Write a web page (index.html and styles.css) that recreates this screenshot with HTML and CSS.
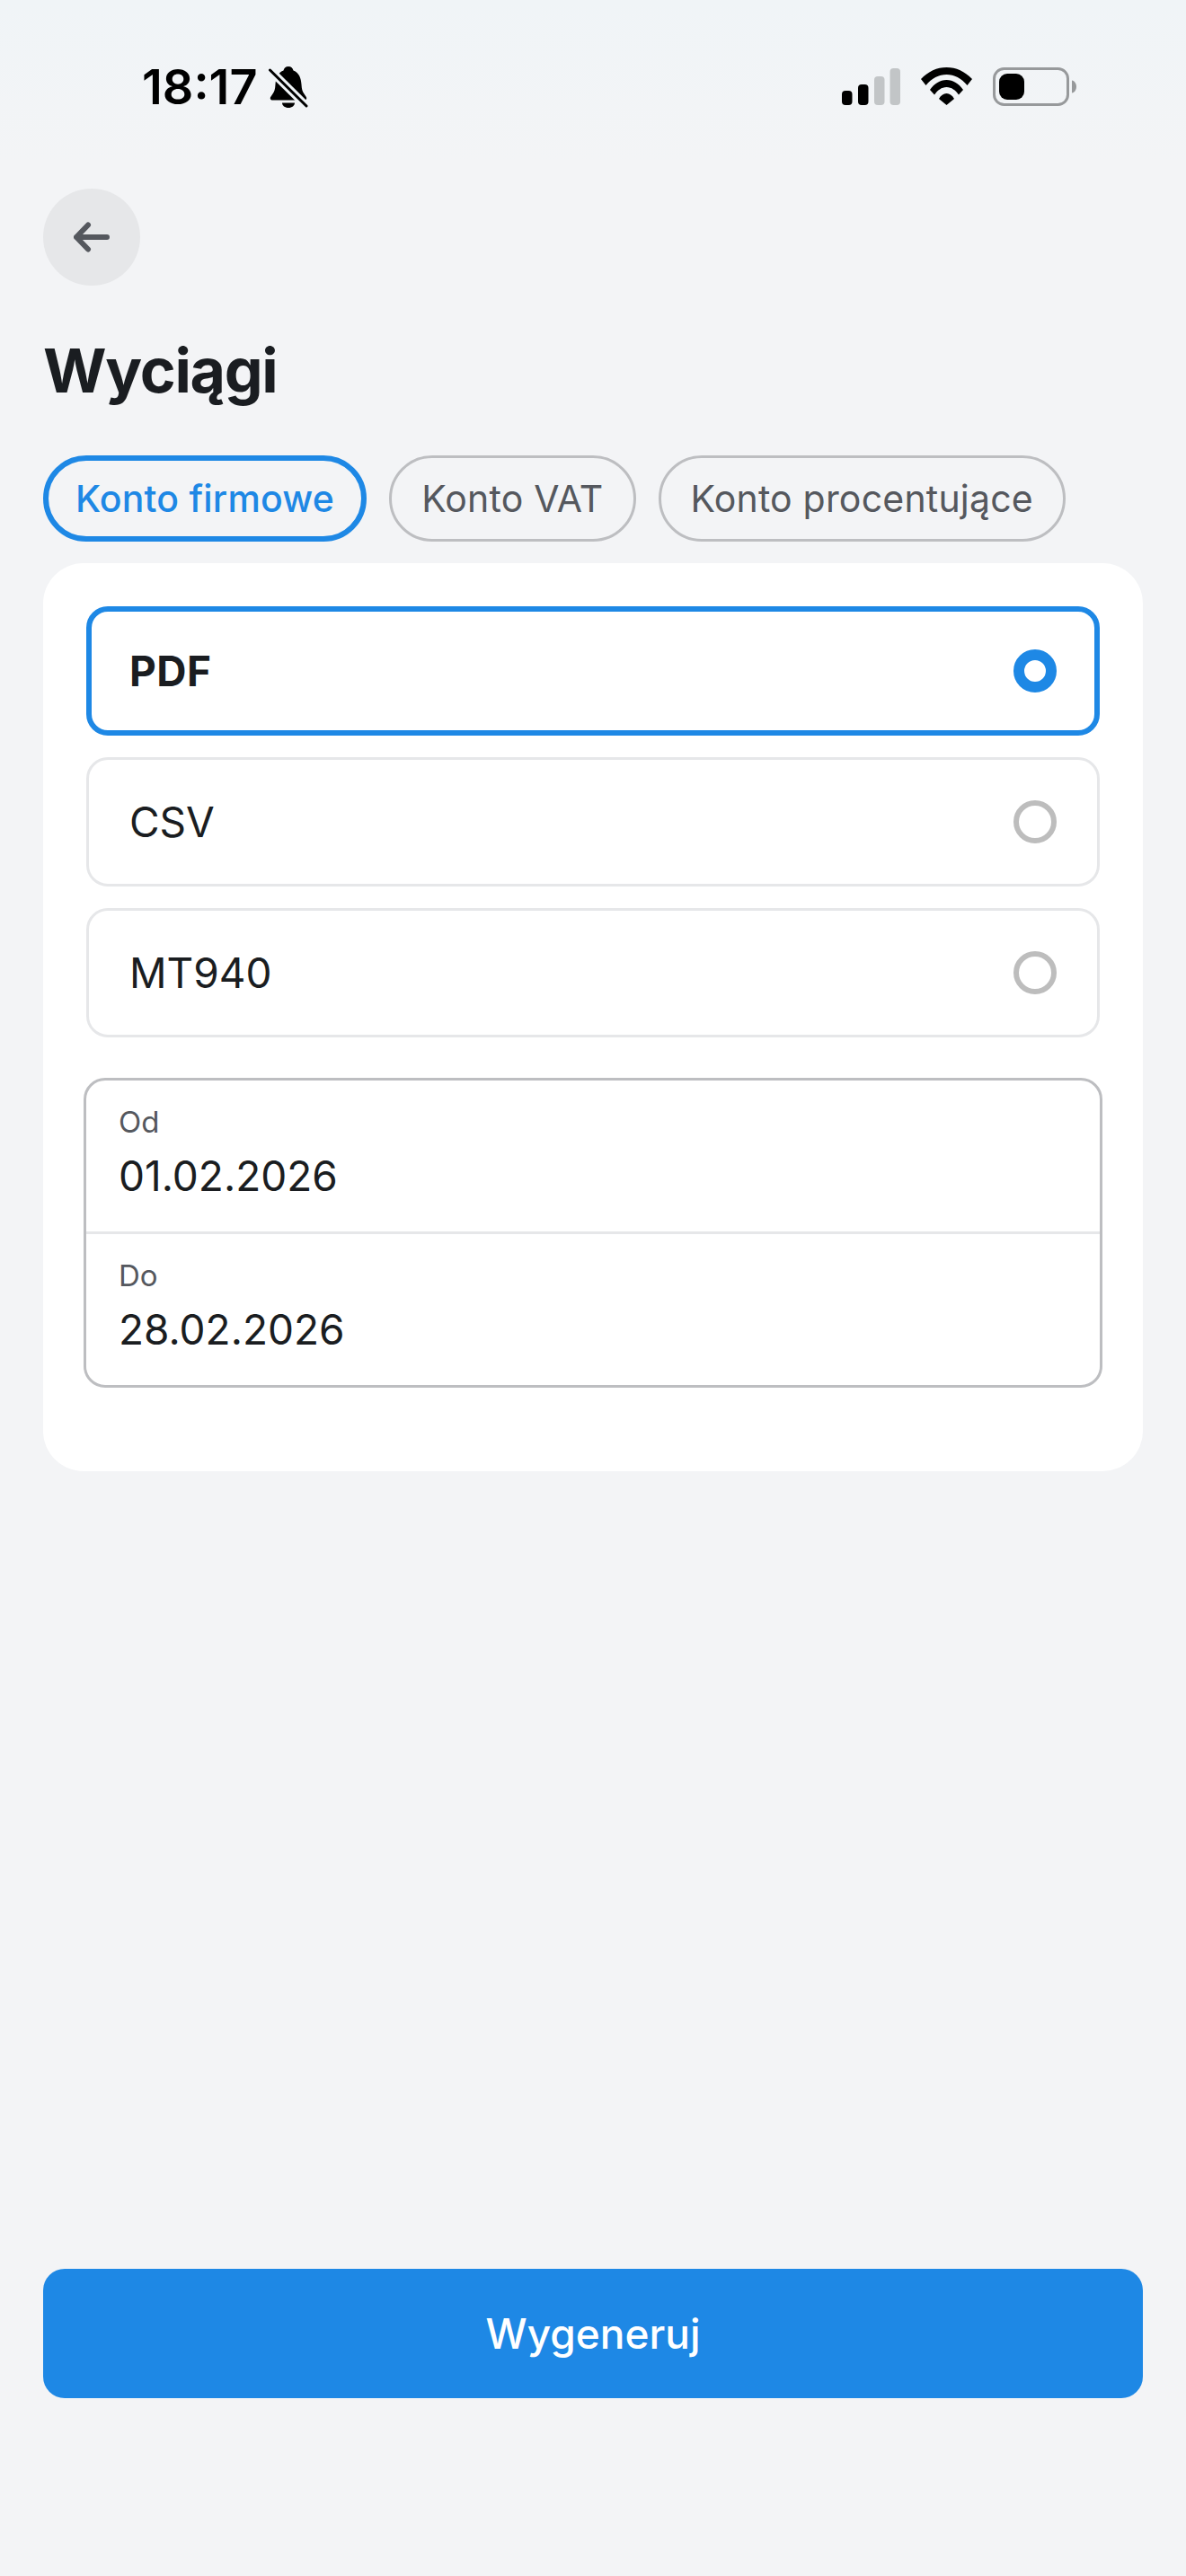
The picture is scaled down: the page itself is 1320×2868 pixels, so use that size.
FILE: index.html
```html
<!DOCTYPE html>
<html lang="pl">
<head>
    <meta charset="UTF-8">
    <meta name="viewport" content="width=device-width, initial-scale=1.0">
    <title>Wyciągi</title>
    <link rel="stylesheet" href="styles.css">
</head>
<body>
    <div class="status-bar">
        <div class="status-left">
            <span class="time">18:17</span>
            <svg class="bell" viewBox="0 0 44 46">
                <path d="M22 0c3 0 5 2 5.500 4.500C34 7 36 13 36.500 20c.3 5 1 8 3 10.500l2 3c1.500 2 .5 4-2 4H4.500c-2.500 0-3.500-2-2-4l2-3c2-2.500 2.700-5.500 3-10.500C8 13 10 7 16.500 4.500 17 2 19 0 22 0z" fill="#000"/>
                <path d="M15 40.500h14c0 3-3 5.500-7 5.500s-7-2.500-7-5.500z" fill="#000"/>
                <path d="M1.500 4 42 44" stroke="#f0f4f7" stroke-width="9"/>
                <path d="M1.500 4 42 44" stroke="#000" stroke-width="3" stroke-linecap="round"/>
            </svg>
        </div>
        <div class="status-right">
            <svg class="signal" viewBox="0 0 65 41">
                <rect x="0" y="25" width="11.500" height="16" rx="4" fill="#000"/>
                <rect x="18" y="18" width="11.500" height="23" rx="4" fill="#000"/>
                <rect x="36" y="9" width="11.500" height="32" rx="4" fill="#c2c5c7"/>
                <rect x="53.500" y="0" width="11.500" height="41" rx="4" fill="#c2c5c7"/>
            </svg>
            <svg class="wifi" viewBox="0 0 57 42">
                <path d="M0 13C8 4.500 18 0 28.500 0S49 4.500 57 13l-5.500 7C45 12 37 8 28.500 8S12 12 5.500 20z" fill="#000"/>
                <path d="M10 25c5-7 11-11 18.500-11S42 18 47 25l-5 5.500c-3.500-5-8-8.500-13.500-8.500S18.500 25.500 15 30.500z" fill="#000"/>
                <path d="M20 35c2-3.500 5-6 8.500-6s6.500 2.500 8.500 6l-8.500 7z" fill="#000"/>
            </svg>
            <svg class="battery" viewBox="0 0 93 43">
                <rect x="1.500" y="1.500" width="82" height="40" rx="11" fill="none" stroke="#97999b" stroke-width="3"/>
                <rect x="7" y="7" width="28" height="29" rx="9" fill="#000"/>
                <path d="M88 14.500c3 .5 5 3.500 5 7s-2 6.500-5 7z" fill="#97999b"/>
            </svg>
        </div>
    </div>

    <div class="content">
        <button class="back">
            <svg viewBox="0 0 40 34"><path d="M3 17H37M16 3.500 3 17 16 30.500" fill="none" stroke="#55585e" stroke-width="6" stroke-linecap="round" stroke-linejoin="round"/></svg>
        </button>

        <h1 class="title">Wyciągi</h1>

        <div class="tabs">
            <div class="tab tab-active">Konto firmowe</div>
            <div class="tab">Konto VAT</div>
            <div class="tab">Konto procentujące</div>
        </div>

        <div class="card">
            <div class="option option-active">
                <span>PDF</span>
                <span class="radio radio-active"></span>
            </div>
            <div class="option">
                <span>CSV</span>
                <span class="radio"></span>
            </div>
            <div class="option">
                <span>MT940</span>
                <span class="radio"></span>
            </div>

            <div class="dates">
                <div class="date-row">
                    <div class="date-label">Od</div>
                    <div class="date-value">01.02.2026</div>
                </div>
                <div class="date-row">
                    <div class="date-label">Do</div>
                    <div class="date-value">28.02.2026</div>
                </div>
            </div>
        </div>

        <button class="generate">Wygeneruj</button>
    </div>
</body>
</html>
```

FILE: styles.css
```css
* {
    box-sizing: border-box;
    margin: 0;
    padding: 0;
}

body {
    font-family: 'Inter', 'Liberation Sans', sans-serif;
    background: #f3f4f6;
    color: #1a1d21;
    height: 2868px;
    display: flex;
    flex-direction: column;
}

.status-bar {
    height: 180px;
    background: linear-gradient(180deg, #f0f4f7, #f3f4f6);
    display: flex;
    justify-content: space-between;
    align-items: flex-start;
    padding: 70px 122px 0 158px;
}

.status-left {
    display: flex;
    align-items: flex-start;
    gap: 12px;
}

.time {
    font-size: 54px;
    line-height: 54px;
    font-weight: 600;
    color: #000;
}

.bell {
    width: 44px;
    height: 46px;
    margin-top: 4px;
}

.status-right {
    display: flex;
    align-items: flex-start;
    gap: 23px;
    padding-top: 5px;
}

.signal {
    width: 65px;
    height: 41px;
    margin-top: 1px;
}

.wifi {
    width: 57px;
    height: 42px;
}

.battery {
    width: 93px;
    height: 43px;
}

.content {
    flex: 1;
    display: flex;
    flex-direction: column;
    padding: 30px 48px 198px;
}

.back {
    width: 108px;
    height: 108px;
    border-radius: 50%;
    border: none;
    background: #e6e7e9;
    display: flex;
    align-items: center;
    justify-content: center;
}

.back svg {
    width: 40px;
    height: 34px;
}

.title {
    font-size: 68px;
    line-height: 84px;
    font-weight: 700;
    letter-spacing: -1.3px;
    margin-top: 52px;
}

.tabs {
    display: flex;
    gap: 25px;
    margin-top: 53px;
}

.tab {
    height: 96px;
    padding: 0 33px;
    border: 3px solid #bdbec1;
    border-radius: 48px;
    font-size: 41px;
    letter-spacing: .2px;
    color: #55585e;
    display: flex;
    align-items: center;
}

.tab-active {
    border: 6px solid #1e88e5;
    padding: 0 30px;
    color: #1e88e5;
    font-weight: 500;
}

.card {
    margin-top: 24px;
    background: #fff;
    border-radius: 45px;
    padding: 48px 45px 93px;
    display: flex;
    flex-direction: column;
    gap: 24px;
}

.option {
    height: 144px;
    margin: 0 3px;
    padding: 0 45px;
    border: 3px solid #e6e7e9;
    border-radius: 24px;
    font-size: 46px;
    display: flex;
    align-items: center;
    justify-content: space-between;
}

.option-active {
    border: 6px solid #1e88e5;
    padding: 0 42px;
    font-weight: 700;
    letter-spacing: .5px;
}

.radio {
    width: 48px;
    height: 48px;
    border-radius: 50%;
    border: 6px solid #bdbdbd;
}

.radio-active {
    border: 12px solid #1e88e5;
}

.dates {
    margin-top: 21px;
    border: 3px solid #bdbec1;
    border-radius: 24px;
}

.date-row {
    height: 168px;
    padding: 26px 36px 0;
}

.date-row + .date-row {
    height: 171px;
    border-top: 3px solid #e6e7e9;
}

.date-label {
    font-size: 33px;
    line-height: 40px;
    color: #55585e;
}

.date-value {
    font-size: 46px;
    line-height: 56px;
    margin-top: 12px;
}

.generate {
    margin-top: auto;
    height: 144px;
    border: none;
    border-radius: 24px;
    background: #1e88e5;
    color: #fff;
    font-family: inherit;
    font-size: 46px;
    font-weight: 500;
}
```
